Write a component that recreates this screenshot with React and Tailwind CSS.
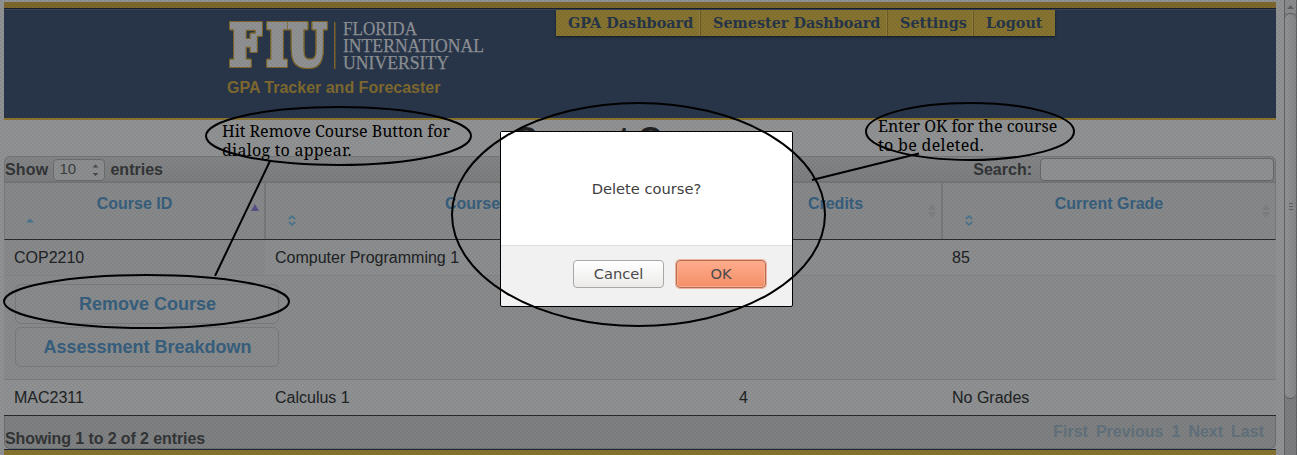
import React from "react";

const Sans = "font-['Liberation_Sans',sans-serif]";

function Sort({ className }) {
  return (
    <svg width="9" height="14" viewBox="0 0 9 14" className={className}>
      <path d="M0 6 L4 0 L8 6Z M0 8 L4 14 L8 8Z" fill="#7d7f80" />
    </svg>
  );
}

function Chevrons({ className }) {
  return (
    <svg width="8" height="11" viewBox="0 0 8 11" className={className}>
      <path d="M0.8 4 L4 1.2 L7.2 4 M0.8 7 L4 9.8 L7.2 7" fill="none" stroke="#4a748f" strokeWidth="1.7" />
    </svg>
  );
}

function Logo() {
  return (
    <svg width="262" height="54" viewBox="0 0 262 54" className="block overflow-visible">
      <text x="2.500 49.500 76" y="47.200" fontFamily="DejaVu Serif" fontWeight="bold" fontSize="56" transform="translate(3 0) scale(0.79 1) translate(-3 0)" fill="#909193" stroke="#909193" strokeWidth="4" strokeLinejoin="miter" className="filter-[drop-shadow(1px_0_0_#7d662b)_drop-shadow(-1px_0_0_#7d662b)_drop-shadow(0_1px_0_#7d662b)_drop-shadow(0_-1px_0_#7d662b)]">FIU</text>
      <rect x="107" y="4" width="1.5" height="47" fill="#7d662b" />
      <g fontFamily="Liberation Serif" fontSize="18" fill="#8d9195" stroke="#8d9195" strokeWidth="0.25">
        <text x="116" y="16.500" textLength="74" lengthAdjust="spacingAndGlyphs">FLORIDA</text>
        <text x="116" y="33.500" textLength="141" lengthAdjust="spacingAndGlyphs">INTERNATIONAL</text>
        <text x="116" y="50.500" textLength="106" lengthAdjust="spacingAndGlyphs">UNIVERSITY</text>
      </g>
    </svg>
  );
}

function Header() {
  const item = "flex h-[26px] items-center border-r border-[#6b5927] shadow-[inset_-1px_0_0_#90803b]";
  return (
    <header className="flex h-[118px] shrink-0 flex-col border-t-[6px] border-b-2 border-t-[#7e672d] border-b-[#8b7530] bg-[#29364a]">
      <div className="h-px shrink-0 bg-[#19202b]" />
      <div className="h-px shrink-0 bg-[#3b4656]" />
      <div className="flex items-start">
        <div className="ml-[223px] w-[329px] shrink-0 pt-2">
          <Logo />
          <div className="mt-[6px] text-[16px] leading-5 font-bold whitespace-nowrap text-[#7f692f]">GPA Tracker and Forecaster</div>
        </div>
        <nav className="flex h-[26px] w-[499px] bg-[#877431] font-['DejaVu_Serif',serif] text-[14.4px] font-bold whitespace-nowrap text-[#263649] shadow-[0_1px_2px_#141b25]">
          <span className={item + " w-[145px] pl-3"}>GPA Dashboard</span>
          <span className={item + " w-[187px] pl-3"}>Semester Dashboard</span>
          <span className={item + " w-[86px] pl-3"}>Settings</span>
          <span className="flex h-[26px] items-center pl-3">Logout</span>
        </nav>
      </div>
    </header>
  );
}

function Th({ children, className }) {
  return <div className={"relative h-14 shrink-0 pt-[11px] text-center text-base leading-5 font-bold text-[#375f7e] " + className}>{children}</div>;
}

function Row({ cells, className }) {
  return (
    <div className={"flex h-9 shrink-0 items-center text-base text-[#202224] " + className}>
      <span className="w-[261px] pl-[10px]">{cells[0]}</span>
      <span className="w-[464px] pl-[10px]">{cells[1]}</span>
      <span className="w-[213px] pl-[10px]">{cells[2]}</span>
      <span className="pl-[10px]">{cells[3]}</span>
    </div>
  );
}

function CourseTable() {
  const button = "flex h-10 w-[264px] items-center justify-center rounded-[6px] border border-[#797b7c] pl-px text-[18px] font-bold text-[#375f7e]";
  return (
    <section className="flex flex-col">
      <div className="flex h-[27px] shrink-0 items-center rounded-t-[6px] border border-b-2 border-[#747677] bg-linear-to-b from-[#838586] to-[#7d7f80] pt-px text-base font-bold text-[#333537]">
        <span className="tracking-[0.2px]">Show</span>
        <span className="mr-[5px] ml-[5px] flex h-[22px] w-[52px] items-center justify-between rounded-[4px] border border-[#6c6e6f] bg-[#8c8e8f] pr-[5px] pl-[5px] text-[15px] font-normal text-[#3c3e40]">
          10
          <svg width="7" height="14" viewBox="0 0 7 14"><path d="M0.500 4.500 L3.500 1.500 L6.500 4.500Z M0.500 10 L3.500 13 L6.500 10Z" fill="#48494a" /></svg>
        </span>
        <span>entries</span>
        <span className="mr-2 ml-auto">Search:</span>
        <span className="mr-[1px] h-[23px] w-[234px] rounded-[4px] border border-[#666869] bg-[#8f9192]" />
      </div>
      <div className="flex border-x border-b border-x-[#77797a] border-b-[#282a2c] bg-[#87898a]">
        <Th className="w-[261px] border-r-2 border-[#77797a]">
          Course ID
          <svg width="8" height="5" viewBox="0 0 8 5" className="absolute bottom-[16px] left-[21px]"><path d="M0 4.500 L4 0.500 L8 4.500Z" fill="#4a748f" /></svg>
          <svg width="8" height="7" viewBox="0 0 8 7" className="absolute top-[21px] right-[5px]"><path d="M0 7 L4 0 L8 7Z" fill="#565287" /></svg>
        </Th>
        <Th className="w-[464px] border-r border-[#747677] pr-[2px]">
          Course Name
          <Chevrons className="absolute bottom-[13px] left-[22px]" />
        </Th>
        <Th className="w-[213px] border-r-2 border-[#77797a]">
          Credits
          <Sort className="absolute top-[21px] right-[4px]" />
        </Th>
        <Th className="w-[332px]">
          Current Grade
          <Chevrons className="absolute bottom-[13px] left-[22px]" />
          <Sort className="absolute top-[21px] right-[4px]" />
        </Th>
      </div>
      <Row className="border-b border-[#838586] bg-linear-to-r from-[#888a8b] from-[261px] to-[#8c8e8f] to-[261px]" cells={["COP2210", "Computer Programming 1", "4", "85"]} />
      <div className="flex h-[104px] shrink-0 flex-col gap-[3px] border-b border-[#7b7d7e] bg-[#898b8c] pt-2 pl-[11px]">
        <div className={button}>Remove Course</div>
        <div className={button}>Assessment Breakdown</div>
      </div>
      <Row className="border-b border-[#282a2c] bg-[#8f9192]" cells={["MAC2311", "Calculus 1", "4", "No Grades"]} />
      <footer className="flex h-[33px] shrink-0 justify-between rounded-b-[6px] border border-t-0 border-[#6d6f70] bg-[#7f8182] text-base font-bold">
        <span className="pt-[11px] tracking-[-0.1px] text-[#333537]">Showing 1 to 2 of 2 entries</span>
        <span className="flex gap-2 pt-1 pr-[11px] text-[#62717c]">
          <span>First</span><span>Previous</span><span>1</span><span>Next</span><span>Last</span>
        </span>
      </footer>
      <div className="h-[10px] shrink-0 border-t border-[#1f2835] bg-[#877431]" />
    </section>
  );
}

function Scrollbar() {
  return (
    <div className="flex w-[13px] flex-col border-x border-[#616364] bg-[#7c7e7f]">
      <div className="flex h-[13px] shrink-0 items-center justify-center bg-[#8a8c8d]">
        <svg width="7" height="4" viewBox="0 0 7 4"><path d="M0 4 L3.500 0 L7 4Z" fill="#606263" /></svg>
      </div>
      <div className="flex h-[386px] shrink-0 flex-col items-center justify-center gap-[2px] rounded-[6px] border-y border-[#5b5d5e] bg-linear-to-r from-[#919394] to-[#858788]">
        <i className="h-px w-1 bg-[#606263]" /><i className="h-px w-1 bg-[#606263]" /><i className="h-px w-1 bg-[#606263]" />
      </div>
    </div>
  );
}

function Dialog() {
  return (
    <div className="absolute top-[131px] left-[500px] flex h-[176px] w-[293px] flex-col rounded-[2px] border border-black bg-[#f1f1f1] font-['DejaVu_Sans',sans-serif] text-[14.67px] text-[#404040]">
      <div className="flex h-[114px] shrink-0 items-center justify-center border-b border-[#dedede] bg-white pt-px">Delete course?</div>
      <div className="flex items-center gap-[12px] pt-[14px] pl-[72px] text-[#4a4a4a]">
        <button className="h-7 w-[91px] rounded-[4px] border border-[#aaa8a4] bg-linear-to-b from-white to-[#ecebea]">Cancel</button>
        <button className="h-7 w-[90px] rounded-[4px] border border-[#b56d51] bg-linear-to-b from-[#ffac8d] to-[#f38e67] shadow-[0_0_0_1px_#efb49f,inset_0_0_0_1px_#f9ad8f]">OK</button>
      </div>
    </div>
  );
}

function Annotations() {
  const note = "absolute font-['Noto_Serif','Droid_Serif','DejaVu_Serif_Condensed',serif] text-[16px] leading-[19px] whitespace-nowrap text-black";
  return (
    <>
      <svg width="1297" height="455" viewBox="0 0 1297 455" className="absolute top-0 left-0" fill="none" stroke="black" strokeWidth="2">
        <ellipse cx="338.500" cy="136" rx="132.500" ry="29" />
        <ellipse cx="638.500" cy="214.500" rx="186.500" ry="111.500" />
        <ellipse cx="970" cy="131.500" rx="104" ry="28.500" />
        <ellipse cx="146.500" cy="301.500" rx="142.500" ry="26.500" />
        <path d="M270 161 L215 276 M919 153.500 L812 180" />
      </svg>
      <div className={note + " top-[122px] left-[222px]"}>Hit Remove Course Button for<br /><span className="tracking-[0.25px]">dialog to appear.</span></div>
      <div className={note + " top-[117px] left-[878px]"}>Enter OK for the course<br /><span className="tracking-[0.33px]">to be deleted.</span></div>
    </>
  );
}

export default function App() {
  return (
    <div className={"relative flex h-[455px] w-[1297px] overflow-hidden bg-[#909293] " + Sans}>
      <main className="mt-[2px] ml-1 w-[1272px] shrink-0">
        <Header />
        <div className="flex h-9 items-start justify-center text-[32px] leading-[36px] font-bold text-[#202224]">Current Courses</div>
        <CourseTable />
      </main>
      <div className="ml-2 flex"><Scrollbar /></div>
      <div className="absolute inset-0 bg-[radial-gradient(circle_at_1px_1px,rgba(0,0,0,0.05)_0.7px,transparent_1px),radial-gradient(circle_at_3px_3px,rgba(0,0,0,0.05)_0.7px,transparent_1px)] bg-size-[4px_4px]" />
      <Dialog />
      <Annotations />
    </div>
  );
}
